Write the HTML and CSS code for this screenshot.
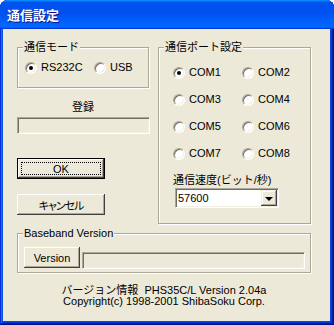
FILE: index.html
```html
<!DOCTYPE html>
<html lang="ja">
<head>
  <meta charset="UTF-8" />
  <title>通信設定</title>
  <link rel="stylesheet" href="styles.css">
</head>
<body>
  <div class="window">
    <div class="titlebar"><span class="title">通信設定</span></div>

    <div class="body">
      <div class="top">
        <div class="left-col">
          <div class="group mode-group">
            <span class="group-label">通信モード</span>
            <div class="mode-row">
              <label class="radio"><span class="dot on"></span>RS232C</label>
              <label class="radio"><span class="dot"></span>USB</label>
            </div>
          </div>

          <div class="reg-label">登録</div>
          <div class="field reg-field"></div>

          <button class="btn default"><span class="focus">OK</span></button>
          <button class="btn cancel">キャンセル</button>
        </div>

        <div class="group port-group">
          <span class="group-label">通信ポート設定</span>
          <div class="ports">
            <label class="radio"><span class="dot on"></span>COM1</label>
            <label class="radio"><span class="dot"></span>COM2</label>
            <label class="radio"><span class="dot"></span>COM3</label>
            <label class="radio"><span class="dot"></span>COM4</label>
            <label class="radio"><span class="dot"></span>COM5</label>
            <label class="radio"><span class="dot"></span>COM6</label>
            <label class="radio"><span class="dot"></span>COM7</label>
            <label class="radio"><span class="dot"></span>COM8</label>
          </div>
          <div class="speed-label">通信速度(ビット/秒)</div>
          <div class="combo">
            <span class="combo-value">57600</span>
            <span class="combo-btn"><span class="arrow"></span></span>
          </div>
        </div>
      </div>

      <div class="group base-group">
        <span class="group-label">Baseband Version</span>
        <div class="base-row">
          <button class="btn version">Version</button>
          <div class="field version-field"></div>
        </div>
      </div>

      <div class="about">
        <div>バージョン情報&nbsp;&nbsp;PHS35C/L Version 2.04a</div>
        <div>Copyright(c) 1998-2001 ShibaSoku Corp.</div>
      </div>
    </div>
  </div>
</body>
</html>
```

FILE: styles.css
```css
html, body {
  margin: 0;
  background: #fff;
}

.window {
  width: 334px;
  height: 325px;
  box-sizing: border-box;
  display: flex;
  flex-direction: column;
  border-radius: 8px 8px 0 0;
  overflow: hidden;
  background: #0b46dc;
  box-shadow: inset -1px -1px #00138c, inset 1px 1px #0831d9,
    inset -2px -2px #001ea0, inset 2px 2px #166aee,
    inset -3px -3px #003bda, inset 3px 3px #0855dd;
  font: 11px "Liberation Sans", "Noto Sans CJK JP", sans-serif;
  color: #000;
}

.titlebar {
  flex: none;
  height: 29px;
  display: flex;
  align-items: center;
  padding-left: 7px;
  background: linear-gradient(180deg, #0997ff, #0053ee 8%, #0050ee 40%, #06f 88%, #06f 93%, #005bff 95%, #003dd7 96%, #003dd7);
}

.title {
  color: #fff;
  font: bold 13px "Noto Sans CJK JP", sans-serif;
  text-shadow: 1px 1px #0f1089;
}

.body {
  flex: 1;
  margin: 0 4px 4px 3px;
  padding: 18px 0 0 14px;
  background: #ece9d8;
}

.top {
  display: grid;
  grid-template-columns: 132px 153px;
  column-gap: 9px;
  align-items: start;
}

/* etched group box */
.group {
  box-sizing: border-box;
  display: flex;
  flex-direction: column;
  align-items: flex-start;
  border: 1px solid #aca899;
  box-shadow: inset 1px 1px 0 #fff, 1px 1px 0 #fff;
}

.group-label {
  margin: -7px 0 0 5px;
  padding: 0 1px;
  line-height: 13px;
  background: #ece9d8;
  white-space: nowrap;
}

.radio {
  display: flex;
  align-items: center;
  gap: 4px;
  width: 69px;
  line-height: 13px;
  white-space: nowrap;
}

.dot {
  flex: none;
  width: 12px;
  height: 12px;
  box-sizing: border-box;
  display: flex;
  align-items: center;
  justify-content: center;
  border-radius: 50%;
  border: 1px solid;
  border-color: #aca899 #fff #fff #aca899;
  box-shadow: inset 1px 1px 0 #716f64, inset -1px -1px 0 #f1efe2;
  background: #fff;
}

.dot.on::after {
  content: "";
  width: 4px;
  height: 4px;
  border-radius: 50%;
  background: #000;
}

.left-col {
  display: flex;
  flex-direction: column;
  align-items: flex-start;
}

.mode-group {
  width: 132px;
  height: 41px;
}

.mode-row {
  display: flex;
  margin: 7px 0 0 7px;
}

.reg-label {
  align-self: stretch;
  margin-top: 13px;
  line-height: 13px;
  text-align: center;
}

/* sunken field */
.field {
  box-sizing: border-box;
  height: 17px;
  border: 1px solid;
  border-color: #aca899 #fff #fff #aca899;
  box-shadow: inset 1px 1px 0 #716f64, inset -1px -1px 0 #f1efe2;
  background: #ece9d8;
}

.reg-field {
  width: 133px;
  margin-top: 3px;
}

.btn {
  box-sizing: border-box;
  width: 88px;
  height: 21px;
  padding: 0;
  border: 0;
  display: flex;
  align-items: center;
  justify-content: center;
  background: #ece9d8;
  color: #000;
  font: inherit;
  box-shadow: inset -1px -1px 0 #404040, inset 1px 1px 0 #fff, inset -2px -2px 0 #aca899;
}

.btn.default {
  margin-top: 24px;
  padding: 3px;
  border: 1px solid #000;
}

.focus {
  flex: 1;
  align-self: stretch;
  display: flex;
  align-items: center;
  justify-content: center;
  border: 1px dotted #000;
}

.btn.cancel {
  margin-top: 15px;
  font-feature-settings: "palt";
  letter-spacing: -1px;
}

.port-group {
  height: 177px;
}

.ports {
  display: grid;
  grid-template-columns: 69px 69px;
  row-gap: 14px;
  margin: 12px 0 0 14px;
}

.speed-label {
  margin: 14px 0 0 14px;
  line-height: 13px;
  white-space: nowrap;
}

.combo {
  box-sizing: border-box;
  width: 104px;
  height: 20px;
  margin: 1px 0 0 16px;
  display: flex;
  align-items: center;
  border: 1px solid;
  border-color: #aca899 #fff #fff #aca899;
  box-shadow: inset 1px 1px 0 #716f64, inset -1px -1px 0 #f1efe2;
  background: #fff;
  padding: 1px;
}

.combo-value {
  flex: 1;
  padding-left: 1px;
}

.combo-btn {
  flex: none;
  width: 16px;
  height: 16px;
  box-sizing: border-box;
  display: flex;
  align-items: center;
  justify-content: center;
  background: #ece9d8;
  box-shadow: inset -1px -1px 0 #404040, inset 1px 1px 0 #f1efe2, inset -2px -2px 0 #aca899, inset 2px 2px 0 #fff;
}

.arrow {
  width: 0;
  height: 0;
  border-left: 4px solid transparent;
  border-right: 4px solid transparent;
  border-top: 4px solid #000;
  margin-top: 1px;
}

.base-group {
  width: 294px;
  height: 40px;
  margin-top: 9px;
}

.base-row {
  display: flex;
  align-items: flex-start;
  margin: 7px 0 0 6px;
}

.btn.version {
  width: 56px;
}

.version-field {
  width: 223px;
  margin: 5px 0 0 2px;
}

.about {
  width: 294px;
  margin-top: 12px;
  line-height: 11px;
  text-align: center;
  white-space: nowrap;
}
```
